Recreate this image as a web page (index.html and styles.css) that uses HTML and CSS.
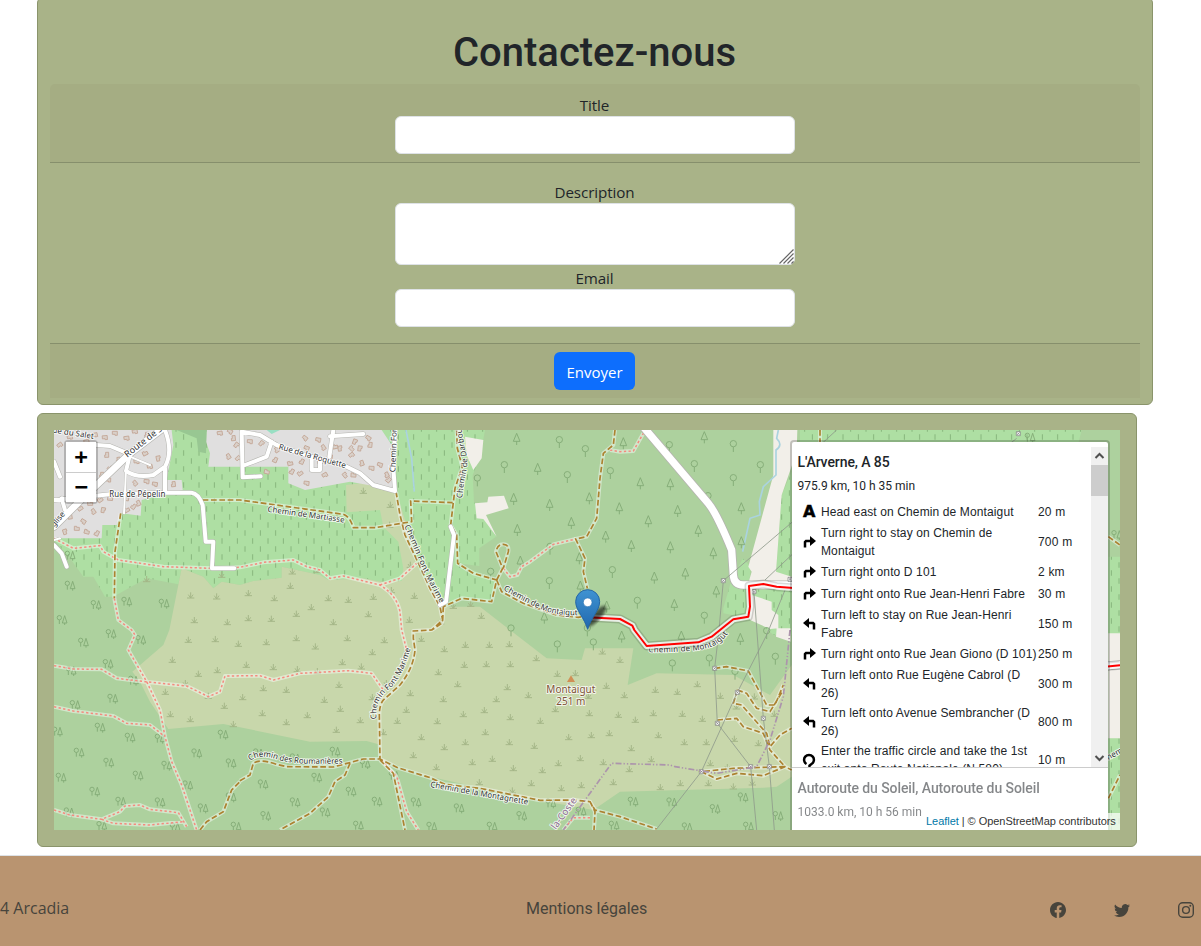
FILE: index.html
```html
<!DOCTYPE html>
<html lang="fr">
<head>
<meta charset="utf-8">
<title>Arcadia - Contact</title>
<link rel="stylesheet" href="styles.css">
</head>
<body>
<main class="page">
  <section class="card contact">
    <h1 class="contact-title">Contactez-nous</h1>
    <form class="contact-form">
      <div class="band band-top">
        <label class="label" for="title">Title</label>
        <input class="field" id="title" type="text">
      </div>
      <div class="form-body">
        <label class="label" for="description">Description</label>
        <div class="area-wrap">
          <textarea class="field area" id="description"></textarea>
          <svg class="grip" viewBox="0 0 15 15"><path d="M.5 14.5 14.5.5M4.5 14.5l10-10M8.500 14.500l6-6M12.500 14.500l2-2"/></svg>
        </div>
        <label class="label" for="email">Email</label>
        <input class="field" id="email" type="email">
      </div>
      <div class="band band-bottom"><button class="send" type="button">Envoyer</button></div>
    </form>
  </section>

  <section class="card map-card">
    <div class="map">
      <svg class="tiles" viewBox="12 15 3198 1200">
        <defs>
          <pattern id="rows" width="46" height="48" patternUnits="userSpaceOnUse"><path d="M10 4v16M33 28v16" stroke="#86b57c" stroke-width="3"/></pattern>
          <marker id="needle" class="sym-wood" markerUnits="userSpaceOnUse" markerWidth="50" markerHeight="50" viewBox="-25 -25 50 50"><path d="M0-17-10 7H10ZM0 7V18"/></marker>
          <marker id="broad" class="sym-wood" markerUnits="userSpaceOnUse" markerWidth="50" markerHeight="50" viewBox="-25 -25 50 50"><circle cy="-6" r="9.500"/><path d="M0 4V19"/></marker>
          <marker id="mixed" class="sym-wood" markerUnits="userSpaceOnUse" markerWidth="50" markerHeight="50" viewBox="-25 -25 50 50"><circle cx="-8" cy="-7" r="6.500"/><path d="M-8 0V12M8-13 1 9H15ZM8 9V15"/></marker>
          <marker id="tuft" class="sym-scrub" markerUnits="userSpaceOnUse" markerWidth="40" markerHeight="40" viewBox="-20 -20 40 40"><path d="M-11 7H11M0 7V-10M-1 6-7-3M1 6 7-3"/></marker>
          <marker id="house" class="sym-house" markerUnits="userSpaceOnUse" markerWidth="40" markerHeight="40" viewBox="-20 -20 40 40" orient="auto"><path d="M-8-6H7V6H0V3H-8Z"/></marker>
          <marker id="tower" class="sym-tower" markerUnits="userSpaceOnUse" markerWidth="20" markerHeight="20" viewBox="-10 -10 20 20"><path d="M-6-6H6V6H-6ZM-4-4 4 4M4-4-4 4"/></marker>
          <linearGradient id="pin" x2="0" y2="1"><stop offset="0" stop-color="#3f93d2"/><stop offset="1" stop-color="#2068ae"/></linearGradient>
          <filter id="soft"><feGaussianBlur stdDeviation="5"/></filter>
          <path id="p-font" d="M1063 304Q1085 350 1102 395T1170 535"/>
          <path id="p-font2" d="M980 882Q972 830 1015 795T1085 660"/>
          <path id="p-mart" d="M652 260L885 293"/>
          <path id="p-roum" d="M600 1008Q630 985 680 1003T880 1015"/>
          <path id="p-magn" d="M1140 1086L1440 1140"/>
          <path id="p-darb" d="M1237 220C1240 150 1262 130 1245 70L1232 0"/>
          <path id="p-mont" d="M1360 494Q1420 530 1470 552T1595 570"/>
          <path id="p-mont2" d="M1795 682Q1880 683 1945 675T2038 620"/>
          <path id="p-roq" d="M685 72L887 130"/>
          <path id="vines" d="M12 15H1305L1290 100 1268 150 1272 230 1305 275 1338 335 1288 370V423L1220 415 1340 465 1322 530 1230 525 1180 545 1140 480 1060 470 995 470 940 460 835 465 810 450 695 425V458L610 468 570 480 515 470 490 490 460 455 395 430 385 478 290 460 190 515H165L130 455H100L60 400 12 345Z"/>
          <path id="vines-e" d="M2250 15H3095L3080 75H2250ZM2225 140 2195 210 2178 445 2225 460ZM2020 550 2040 480 2078 400 2102 425 2098 480 2225 490V630H2170L2120 585 2020 565ZM2205 15H2240V50H2205ZM3175 395H3210V628H3175ZM3175 940H3210V1215H3175Z"/>
          <path id="paths" d="M12 340 70 370 150 362 160 380 205 405 340 425 486 430 570 427 640 412 730 405 770 425 810 435 840 460 880 453 990 480Q1040 510 1050 560L1055 615 1070 675M990 480 1050 460 1100 415M193 520 205 585 245 615 255 630 235 675 290 770 330 855 345 935 365 1010 395 1080 440 1215M12 722 70 732 155 733 200 760 285 770 410 783 475 815 510 800 525 753 630 752 670 765 750 745 895 737 965 745 1000 795M12 845 70 858 190 873 230 895 300 900 345 935M12 1155 60 1170 155 1183 210 1160 225 1143 270 1140 300 1153 385 1163 410 1205M155 1183 190 1195 300 1200 400 1190M995 1005 1040 1055 1070 1160 1105 1215M1360 430 1380 455 1402 450 1415 425 1440 410 1510 358 1577 342M1680 75 1710 80 1750 78 1780 25M1620 1178H1570L1540 1215"/>
          <path id="tracks" d="M212 265 195 380 193 520M458 225 570 225 880 268Q900 275 910 308H975L1085 290 1082 228 1208 233M1038 200 1050 270 1065 330 1115 435 1140 490 1170 545 1178 585 1175 595 1145 615M1180 545 1178 585 1145 615 1090 618 1090 640 1095 675Q1090 730 1050 780L1000 825Q988 840 988 870L990 1002M570 1067 600 1050 610 1015Q630 1000 680 1018L710 1025 850 1026 940 1002H990L1040 1027 1140 1058 1185 1078 1290 1090 1470 1126 1570 1125 1620 1130 1635 1155 1710 1175 1820 1212M990 1005 1030 1045 1065 1215M900 1015 885 1050 855 1070 835 1115 780 1165 690 1215M450 1215 470 1190 520 1160 545 1095 570 1070M1620 1130 1635 1160 1632 1215M1220 15 1222 70 1237 125 1215 190 1202 300 1220 330 1223 415 1270 445 1340 465 1325 530 1235 520 1180 545M1340 465 1355 500 1420 535 1520 570 1585 577 1615 572M1340 465 1358 430 1338 380Q1342 358 1360 358T1375 380L1360 430M1695 15 1690 60 1660 85 1650 160 1640 280 1610 335 1577 342 1605 400 1600 440 1612 490M1994 730 2030 725 2095 738 2115 775 2150 840 2175 840 2200 780M2062 795 2090 805 2120 850 2160 860 2200 795M2062 795 2050 835 2075 840 2150 925 2160 965 2190 930 2225 910M2002 885 2060 880 2080 905 2140 925 2160 975 2205 1025 2050 1030 1954 1040 2000 1062 2060 1045 2140 1052 2205 1025 2225 1035M3175 335 3210 360M3175 1120 3210 1050M2310 15V60"/>
          <path id="road" d="M12 225 180 208 345 203H425Q445 205 458 240L467 350H490L486 430H553M140 60 180 63 240 88 228 138Q260 160 310 150L345 125Q370 80 345 15M345 130V200M12 360 35 385 50 425M12 110 30 155M35 220 45 255M575 20 630 30 680 60 750 85 890 125 930 145 970 180 1035 198 1030 130 1035 15M575 20 578 157 632 154M585 120 650 95 665 50M850 15 838 95M840 34 940 27M785 100V135H810V105M1202 305 1212 330 1188 530 1170 540"/>
          <path id="road-l" d="M12 305 100 218 240 85 345 5"/>
          <path id="road-m" d="M1782 8 1975 235Q2000 265 2045 375L2050 450Q2052 480 2080 480H2225M3175 722 3210 719"/>
          <path id="lane" d="M228 135 222 265M240 95 300 120M12 345 30 340"/>
          <path id="route" d="M1613 577 1710 582 1747 602 1753 615 1790 663 1945 652 1985 635 2050 583 2095 575 2100 545 2097 483 2140 477 2180 485 2240 490M3165 725 3210 721"/>
        </defs>

        <rect class="wood" width="3230" height="1230"/>
        <use href="#vines" class="crop"/><use href="#vines-e" class="crop"/>
        <use href="#vines" fill="url(#rows)"/><use href="#vines-e" fill="url(#rows)"/>
        <path class="scrub" d="M395 430 358 615 340 660 247 740 270 770 300 830 355 912 520 897 570 907 780 950 950 948 985 958 990 1003 1140 1055 1460 1125 1630 1155 1710 1100 2140 1088 2180 1085 2225 1055V720L2160 810 2050 750 1820 745 1733 780 1750 670H1605L1595 705 1490 700 1380 615 1290 545H1180L1140 490 1100 420 1070 300 1038 200 970 170 888 180 890 262 990 255 1000 305 1045 350 1060 430 1055 468 995 470 940 460 835 465 810 450 695 425V458L610 468 570 480 515 470 490 490 460 455Z"/>
        <path class="town" d="M12 15H365L370 60 350 165H395L398 195 275 225 272 272 215 265 200 300H157L155 340H12ZM470 15H995L1025 60 1038 195 900 170 765 195 715 175V125H475L480 85 468 50Z"/>
        <path fill="#98c792" d="M380 15H470L468 85 445 80 440 40Z"/>
        <path class="bare" d="M1245 35 1300 45 1295 100 1270 135 1250 90ZM1275 235 1312 232 1315 215 1362 212 1376 250 1308 270 1340 335 1300 282 1280 280ZM2170 15H2242L2240 80 2195 210 2178 440 2225 455V475H2095L2105 440 2095 425 2170 150ZM2105 510 2165 530V555L2185 570V610L2160 612 2100 585ZM2180 610H2222V650L2178 635ZM3175 625H3210V940H3175Z"/>

        <g class="water"><path d="M2185 15 2180 40Q2200 60 2178 75V150L2140 185 2128 230 2130 270 2100 280 2078 380"/><path d="M1068 15 1085 100 1093 200"/></g>
        <path fill="#98dfc3" d="M650 15H690L665 27Z"/>

        <g class="marks">
          <polyline class="houses" points="30 60 60 37 110 50 135 30 165 38 195 25 230 40 255 20 290 30 170 90 205 105 180 130 155 150 175 165 260 110 300 125 325 100 285 85 255 175 290 170 315 178 370 178 250 205 230 220 250 245 180 220 150 225 130 260 160 255 120 235 90 250 60 275 100 290 140 325 110 320 80 310 45 320 265 235 230 255"/>
          <polyline class="houses" points="510 25 540 20 550 40 535 95 565 100 560 60 600 50 680 75 675 105 650 140 635 55 765 40 770 70 805 45 820 68 840 95 870 70 855 65 810 110 770 90 755 110 750 145 725 140 770 175 825 150 905 90 930 70 915 50 955 40 960 60 935 115 965 130 990 120 1010 150 1015 165 910 150 885 150 905 70 720 115"/>
          <g>
            <polyline class="mixed" points="60 392 60 482 138 540 230 530 342 536 36 585"/>
            <polyline class="tufts" points="422 512 500 515 433 586 532 592 290 463 515 450"/>
          </g>
          <g transform="translate(570)"><polyline class="tufts" points="370 198 451 240 449 300 511 420 157 440 232 436 151 483 25 505 103 520 265 520 325 525 400 516 454 496 523 513 214 547 169 567 385 568 25 580 94 582 508 585 280 592"/></g>
          <g transform="translate(1140)">
            <polyline class="needles" points="260 42 323 132 251 222 359 240 478 220 424 294 262 315 527 335 271 410 448 400 568 250 451 485 530 545 343 578"/>
            <polyline class="broads" points="388 50 466 77 541 143 223 125 412 155 142 165 360 370 547 440 358 473 182 445 243 615"/>
            <polyline class="tufts" points="122 537 70 543 154 573 32 590"/>
          </g>
          <g transform="translate(1710)">
            <polyline class="needles" points="10 55 253 37 61 175 151 178 364 250 173 258 85 289 235 318 364 352 34 363 151 367 280 385 103 458 196 446 289 500 163 540"/>
            <polyline class="broads" points="148 65 340 62 223 122 421 125 340 164 264 218 52 532 253 577"/>
          </g>
          <g transform="translate(0 615)">
            <polyline class="mixed" points="183 12 100 38 272 30 63 123 174 102 250 152 188 206 75 225 22 305 150 293 240 323 330 326 87 368 176 398 350 407 33 443 264 437 134 485 212 515 330 517 57 547 413 466 459 535 440 370 519 314 543 400 543 502 155 588 375 592 558 590"/>
            <polyline class="tufts" points="415 30 496 28 367 90 445 132 502 121 406 160 346 186 475 198 523 228 361 253 421 268 550 283 565 42"/>
          </g>
          <g transform="translate(570 615)">
            <polyline class="mixed" points="55 370 285 365 375 402 230 443 69 463 333 485 462 437 165 517 411 515 255 547 77 558 528 517 355 587 165 385"/>
            <polyline class="tufts" points="79 37 169 25 226 50 322 25 433 31 544 27 397 67 19 105 100 112 172 118 307 97 364 110 232 124 70 175 139 180 297 165 8 202 253 210 397 202 439 160 511 190 67 250 139 277 202 256 301 237 361 271 289 300 430 307 499 240 472 273 544 322 520 376"/>
          </g>
          <g transform="translate(1140 615)">
            <polyline class="mixed" points="87 535 275 558 186 590 453 545 552 587 362 520 5 590"/>
            <polyline class="broads" points="382 48 490 42 472 0"/>
            <polyline class="tufts" points="43 58 106 45 178 45 238 43 319 85 517 65 25 127 103 105 169 103 241 103 382 132 436 130 529 168 83 163 232 172 295 196 40 208 199 208 163 241 376 238 478 250 100 253 241 262 22 274 331 273 475 198 565 255 166 307 416 322 484 316 538 310 43 352 106 337 238 337 313 348 127 397 187 387 385 400 451 385 520 397 19 412 250 415 337 421 304 460 148 457 394 475 454 466 550 457 247 482"/>
          </g>
          <g transform="translate(1710 615)">
            <polyline class="mixed" points="39 515 155 517 285 537 369 502 201 592 474 558 385 590"/>
            <polyline class="needles" points="361 27 5 20 184 20"/>
            <polyline class="broads" points="157 105 268 90 345 130 466 85 440 8"/>
            <polyline class="tufts" points="0 90 13 196 106 180 172 186 232 163 301 198 403 200 349 230 100 250 187 252 247 267 463 252 46 270 115 316 193 337 259 337 343 327 415 340 34 355 94 388 28 418 271 400 322 412 181 460 265 460 340 470 121 472 397 458"/>
          </g>
          <polyline class="mixed" points="2940 38 3200 330"/>
        </g>

        <use href="#paths" class="halo"/><use href="#paths" class="path-dots"/>
        <use href="#tracks" class="halo"/><use href="#tracks" class="path-track"/>

        <use href="#lane" class="road w6 casing"/><use href="#road" class="road w12 casing"/><use href="#road-l" class="road w20 casing"/><use href="#road-m" class="road w22 casing"/>
        <use href="#lane" class="road w6"/><use href="#road" class="road w12"/><use href="#road-l" class="road w20"/><use href="#road-m" class="road w22"/>

        <g class="power"><path d="M2240 280 2020 467 2007 615 1994 730 2002 895 2102 1025 2120 1215M2230 385 2145 465M2112 500 2140 880 2158 1025 2173 1215M2205 495 2150 630 2062 802 1954 1040 1820 1212M2900 40 2830 95M2300 70 2360 15"/>
          <polyline class="towers" points="2020 467 2112 500 2220 463 1994 730 2002 895 2062 802 2140 880 2102 1025 2158 1025 1954 1040 2905 26"/></g>
        <path class="boundary" d="M2220 615 2200 815 2160 945 2120 1025 2000 1045 1875 1025 1860 1020 1685 1015 1540 1215"/>

        <g class="labels">
          <text><textPath href="#p-mart" textLength="233">Chemin de Martiasse</textPath></text>
          <text><textPath href="#p-font" textLength="255">Chemin Font Marime</textPath></text>
          <text><textPath href="#p-font2" textLength="242">Chemin Font Marime</textPath></text>
          <text><textPath href="#p-roum" textLength="283">Chemin des Roumanières</textPath></text>
          <text><textPath href="#p-magn" textLength="298">Chemin de la Montagnette</textPath></text>
          <text><textPath href="#p-darb">Chemin de Darbou</textPath></text>
          <text><textPath href="#p-mont" textLength="240">Chemin de Montaigut</textPath></text>
          <text><textPath href="#p-mont2" textLength="255">Chemin de Montaigut</textPath></text>
          <text><textPath href="#p-roq" textLength="208">Rue de la Roquette</textPath></text>
          <text x="178" y="216" textLength="168">Rue de Pépelin</text>
          <text class="big" transform="translate(232 98) rotate(-38)">Route de Se</text>
          <text transform="translate(-8 20) rotate(9)" textLength="140">Rue du Salet</text>
          <text transform="translate(4 318) rotate(-50)">Église</text>
          <text transform="translate(1036 142) rotate(-88)">Chemin Font</text>
          <text transform="translate(3175 1005) rotate(-28)">nemin</text>
          <text class="commune" transform="translate(1517 1215) rotate(-54)">la-Coste</text>
          <path fill="#d08f55" d="M1551 771 1563 751 1575 771Z"/>
          <text class="peak" x="1489" y="804" textLength="147">Montaigut</text>
          <text class="peak" x="1519" y="839" textLength="87">251 m</text>
        </g>

        <use href="#route" class="route r1"/><use href="#route" class="route r2"/><use href="#route" class="route r3"/>

        <ellipse cx="1640" cy="573" rx="13" ry="40" transform="rotate(42 1640 573)" opacity=".6" filter="url(#soft)"/>
        <path fill="url(#pin)" stroke="#2466a5" stroke-width="3" d="M1613 613C1604 580 1577 556 1577 530A36 36 0 0 1 1649 530C1649 556 1622 580 1613 613Z"/>
        <circle cx="1613" cy="532" r="13" fill="#fff" stroke="#2d74b2" stroke-width="2"/>
      </svg>

      <div class="zoom"><span class="zoom-btn">+</span><span class="zoom-btn">−</span></div>

      <aside class="routing">
        <div class="alt first">
          <h2 class="alt-name">L'Arverne, A 85</h2>
          <h3 class="alt-sum">975.9 km, 10 h 35 min</h3>
          <ol class="steps">
            <li class="step"><b class="start">A</b><span class="what">Head east on Chemin de Montaigut</span><span class="dist">20 m</span></li>
            <li class="step two"><svg class="turn" viewBox="0 0 13 13"><path d="M2 11.500V6L3 5H8"/><path class="head" d="M7 0 13 5 7 10Z"/></svg><span class="what">Turn right to stay on Chemin de<br>Montaigut</span><span class="dist">700 m</span></li>
            <li class="step"><svg class="turn" viewBox="0 0 13 13"><path d="M2 11.500V6L3 5H8"/><path class="head" d="M7 0 13 5 7 10Z"/></svg><span class="what">Turn right onto D 101</span><span class="dist">2 km</span></li>
            <li class="step"><svg class="turn" viewBox="0 0 13 13"><path d="M2 11.500V6L3 5H8"/><path class="head" d="M7 0 13 5 7 10Z"/></svg><span class="what">Turn right onto Rue Jean-Henri Fabre</span><span class="dist">30 m</span></li>
            <li class="step two"><svg class="turn left" viewBox="0 0 13 13"><path d="M2 11.500V6L3 5H8"/><path class="head" d="M7 0 13 5 7 10Z"/></svg><span class="what">Turn left to stay on Rue Jean-Henri<br>Fabre</span><span class="dist">150 m</span></li>
            <li class="step"><svg class="turn" viewBox="0 0 13 13"><path d="M2 11.500V6L3 5H8"/><path class="head" d="M7 0 13 5 7 10Z"/></svg><span class="what">Turn right onto Rue Jean Giono (D 101)</span><span class="dist">250 m</span></li>
            <li class="step two"><svg class="turn left" viewBox="0 0 13 13"><path d="M2 11.500V6L3 5H8"/><path class="head" d="M7 0 13 5 7 10Z"/></svg><span class="what">Turn left onto Rue Eugène Cabrol (D<br>26)</span><span class="dist">300 m</span></li>
            <li class="step two"><svg class="turn left" viewBox="0 0 13 13"><path d="M2 11.500V6L3 5H8"/><path class="head" d="M7 0 13 5 7 10Z"/></svg><span class="what">Turn left onto Avenue Sembrancher (D<br>26)</span><span class="dist">800 m</span></li>
            <li class="step two"><svg class="turn" viewBox="0 0 13 13"><path d="M3.500 10A4.900 4.900 0 1 1 8.500 10L6.500 11.500V16"/></svg><span class="what">Enter the traffic circle and take the 1st<br>exit onto Route Nationale (N 580)</span><span class="dist">10 m</span></li>
          </ol>
          <div class="scrollbar">
            <svg class="chev" viewBox="0 0 17 17"><path d="M4.500 10.500l4-4 4 4"/></svg>
            <div class="thumb"></div>
            <svg class="chev down" viewBox="0 0 17 17"><path d="M4.500 6.500l4 4 4-4"/></svg>
          </div>
        </div>
        <div class="alt second">
          <h2 class="alt-name">Autoroute du Soleil, Autoroute du Soleil</h2>
          <h3 class="alt-sum">1033.0 km, 10 h 56 min</h3>
        </div>
      </aside>
      <div class="credit"><a class="credit-link">Leaflet</a> | © OpenStreetMap contributors</div>
    </div>
  </section>

  <footer class="footer">
    <span class="copyright">4 Arcadia</span>
    <a class="legal">Mentions légales</a>
    <div class="social">
      <svg class="social-icon" viewBox="0 0 16 16"><path d="M16 8.049c0-4.446-3.582-8.050-8-8.050C3.580 0-.002 3.603-.002 8.050c0 4.017 2.926 7.347 6.750 7.951v-5.625h-2.030V8.050H6.750V6.275c0-2.017 1.195-3.131 3.022-3.131.876 0 1.791.157 1.791.157v1.980h-1.009c-.993 0-1.303.621-1.303 1.258v1.510h2.218l-.354 2.326H9.250V16c3.824-.604 6.750-3.934 6.750-7.951"/></svg>
      <svg class="social-icon" viewBox="0 0 16 16"><path d="M5.026 15c6.038 0 9.341-5.003 9.341-9.334q.002-.211-.006-.422A6.700 6.700 0 0 0 16 3.542a6.700 6.700 0 0 1-1.889.518 3.300 3.300 0 0 0 1.447-1.817 6.500 6.500 0 0 1-2.087.793A3.286 3.286 0 0 0 7.875 6.030a9.320 9.320 0 0 1-6.767-3.429 3.290 3.290 0 0 0 1.018 4.382A3.300 3.300 0 0 1 .640 6.575v.045a3.290 3.290 0 0 0 2.632 3.218 3.200 3.200 0 0 1-.865.115 3 3 0 0 1-.614-.057 3.280 3.280 0 0 0 3.067 2.277A6.600 6.600 0 0 1 .780 13.580a6 6 0 0 1-.780-.045A9.340 9.340 0 0 0 5.026 15"/></svg>
      <svg class="social-icon line" viewBox="0 0 16 16"><rect x=".7" y=".7" width="14.600" height="14.600" rx="4"/><circle cx="8" cy="8" r="3.400"/><circle class="dot" cx="12.300" cy="3.700" r="1"/></svg>
    </div>
  </footer>
</main>
</body>
</html>
```

FILE: styles.css
```css
* { box-sizing: border-box; }
body { margin: 0; background: #fff; color: #212529; font: 16px/24px "Open Sans", "Noto Sans", sans-serif; }
.page { height: 946px; overflow: hidden; display: flex; flex-direction: column; }
.card { background: #a9b388; border: 1px solid #8a946b; border-radius: 6px; margin-left: 37px; flex: none; }
.contact { width: 1116px; height: 408px; margin-top: -3px; padding: 31px 12px 6px; }
.contact-title { margin: 0 0 7px; padding-right: 1px; font: 500 40px/48px Roboto, sans-serif; text-align: center; }
.band { background: #a5ad83; padding: 8px; display: flex; flex-direction: column; align-items: center; }
.band-top { border-bottom: 1px solid #868f6c; border-radius: 5px 5px 0 0; }
.band-bottom { border-top: 1px solid #868f6c; }
.form-body { padding: 16px; display: flex; flex-direction: column; align-items: center; }
.label { font-size: 15.2px; height: 24px; line-height: 26px; letter-spacing: -.1px; padding-right: 1px; }
.field { display: block; width: 400px; height: 38px; border: 1px solid #dee2e6; border-radius: 6px; background: #fff; padding: 6px 12px; }
.area-wrap { position: relative; height: 62px; }
.area { height: 62px; resize: none; }
.grip { position: absolute; right: 1px; bottom: 1px; width: 15px; height: 15px; fill: none; stroke: #666; stroke-width: 1.2; }
.send { width: 81px; height: 38px; margin-right: 1px; border: 0; border-radius: 6px; background: #0d6efd; color: #fff; font: 15px/24px "Open Sans", sans-serif; padding: 8px 0 6px; }

.map-card { width: 1100px; height: 434px; margin-top: 8px; padding: 16px; }
.map { position: relative; width: 1066px; height: 400px; overflow: hidden; }
.tiles { display: block; width: 1066px; height: 400px; }
.wood { fill: #add19e; }
.crop { fill: #aedfa3; }
.scrub { fill: #c8d7ab; }
.town { fill: #e0dfdf; }
.bare { fill: #f2efe9; }
.water path { fill: none; stroke: #aad3df; stroke-width: 5; }
.sym-wood { fill: none; stroke: #83ab76; stroke-width: 2.8; }
.sym-scrub { fill: none; stroke: #a3b585; stroke-width: 2.8; }
.sym-house { fill: #d9d0c9; stroke: #c3a594; stroke-width: 2.5; }
.sym-tower { fill: #fff; stroke: #777; stroke-width: 2; }
.needles { marker: url(#needle); }
.broads { marker: url(#broad); }
.mixed { marker: url(#mixed); }
.tufts { marker: url(#tuft); }
.houses { marker: url(#house); }
.towers { marker: url(#tower); }
.marks polyline, .power polyline { fill: none; stroke: none; }
.halo { fill: none; stroke: #fff; stroke-opacity: .45; stroke-width: 12; stroke-linejoin: round; }
.path-dots { fill: none; stroke: #f58a7e; stroke-width: 4.5; stroke-dasharray: 7 7; }
.path-track { fill: none; stroke: #ac8230; stroke-width: 5; stroke-dasharray: 17 8; }
.road { fill: none; stroke: #fff; stroke-linejoin: round; stroke-linecap: round; }
.w6 { stroke-width: 6px; }
.w12 { stroke-width: 12px; }
.w20 { stroke-width: 20px; }
.w22 { stroke-width: 22px; }
.casing { stroke: #b5b5b0; }
.w6.casing { stroke-width: 8px; }
.w12.casing { stroke-width: 15px; }
.w20.casing { stroke-width: 24px; }
.w22.casing { stroke-width: 27px; }
.power path { fill: none; stroke: #8f9a8c; stroke-width: 2.5; }
.power .towers { fill: none; }
.boundary { fill: none; stroke: #ac94ac; stroke-width: 5; stroke-dasharray: 18 6 4 6 4 6; }
.labels text { font: 24px "Noto Sans", sans-serif; fill: #333; stroke: #fff; stroke-opacity: .75; stroke-width: 6; paint-order: stroke; stroke-linejoin: round; }
.labels .big { font-size: 27px; }
.labels .peak { font-size: 30px; fill: #7d5337; }
.labels .commune { font-size: 29px; fill: #8c6d92; }
.route { fill: none; stroke-linejoin: round; }
.r1 { stroke: #000; stroke-opacity: .15; stroke-width: 27px; }
.r2 { stroke: #fff; stroke-opacity: .8; stroke-width: 18px; }
.r3 { stroke: #f00; stroke-width: 6px; }

.zoom { position: absolute; left: 10px; top: 10px; width: 34px; border: 2px solid rgba(0,0,0,.2); border-radius: 4px; background-clip: padding-box; }
.zoom-btn { display: block; height: 30px; background: #fff; color: #000; font: bold 22px/29px "DejaVu Sans Mono", monospace; text-align: center; }
.zoom-btn + .zoom-btn { border-top: 1px solid #ccc; line-height: 28px; }

.routing { position: absolute; left: 736px; top: 10px; width: 320px; height: 410px; border: 2px solid rgba(0,0,0,.2); border-radius: 4px; background: #fff; background-clip: padding-box; padding-top: 5px; }
.alt { position: relative; padding-left: 5.5px; }
.first { height: 321px; overflow: hidden; border-bottom: 1px solid #ccc; }
.alt-name { margin: 0; padding-top: 7px; font: 500 14px/17px Roboto, sans-serif; letter-spacing: -.08px; }
.alt-sum { margin: 0; padding-top: 6px; font: 400 12px/18px Roboto, sans-serif; letter-spacing: 0; }
.steps { list-style: none; margin: 6px 0 0; padding: 0; font: 12px/18px "Liberation Sans", Arial, sans-serif; letter-spacing: .12px; }
.step { display: flex; align-items: center; height: 22px; padding-left: 5.5px; }
.two { height: 38px; }
.turn { width: 13px; height: 13px; margin-right: 5px; fill: none; stroke: #000; stroke-width: 2.5; overflow: visible; }
.turn .head { fill: #000; stroke: none; }
.left { transform: scaleX(-1); }
.start { width: 13px; margin-right: 5px; font: bold 16px/18px "DejaVu Sans", sans-serif; color: #000; letter-spacing: 0; -webkit-text-stroke: .5px #000; }
.what { width: 217px; white-space: nowrap; }
.dist { white-space: nowrap; letter-spacing: .2px; }
.scrollbar { position: absolute; right: 0; top: 0; width: 17px; height: 320px; background: #f0f0f0; display: flex; flex-direction: column; }
.chev { width: 17px; height: 18px; fill: none; stroke: #505050; stroke-width: 2; }
.thumb { height: 31px; background: #cdcdcd; }
.down { margin-top: auto; }
.second { opacity: .55; }
.second .alt-name { padding-top: 12px; }
.credit { position: absolute; right: 0; bottom: 0; width: 199px; height: 17px; padding-left: 5px; background: rgba(255,255,255,.7); color: #333; font: 11px/17px "Liberation Sans", Arial, sans-serif; white-space: nowrap; letter-spacing: -.04px; }
.credit-link { color: #0078a8; }

.footer { flex: none; height: 91px; margin-top: 8px; border-top: 1px solid #dee2e6; background: #b99470; color: #47443c; display: grid; grid-template-columns: 526px 524px 1fr; padding-top: 41px; }
.copyright { font-size: 16px; line-height: 22px; }
.legal { font-family: Roboto, sans-serif; }
.social { display: flex; gap: 48px; padding-top: 5px; }
.social-icon { flex: none; width: 16px; height: 16px; fill: currentColor; }
.line { fill: none; stroke: currentColor; stroke-width: 1.4; }
.line .dot { fill: currentColor; stroke: none; }
```
